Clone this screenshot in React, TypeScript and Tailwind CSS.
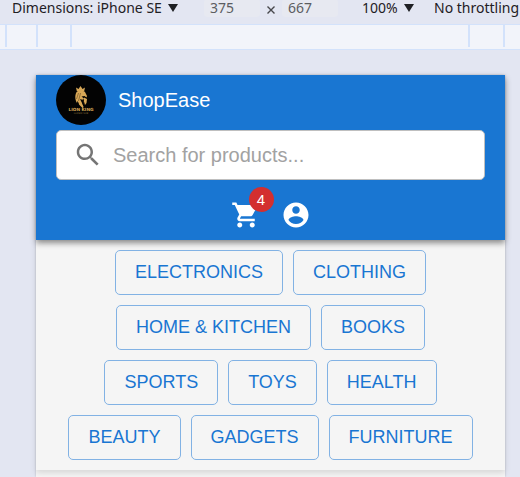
import React from 'react';

const categories = [
  'Electronics',
  'Clothing',
  'Home & Kitchen',
  'Books',
  'Sports',
  'Toys',
  'Health',
  'Beauty',
  'Gadgets',
  'Furniture',
];

function Picker({ label, value }: { label: string; value: string }) {
  return (
    <div className="flex shrink-0 items-center gap-1.5">
      <select aria-label={label} className="h-[18px] appearance-none bg-transparent text-sm leading-[18px] text-[#1f2024]">
        <option>{value}</option>
      </select>
      <svg className="pointer-events-none h-2 w-2.5" viewBox="0 0 10 8" aria-hidden="true">
        <path d="M0 0h10L5 8z" fill="#1f2024" />
      </svg>
    </div>
  );
}

function SizeInput({ label, value }: { label: string; value: string }) {
  return (
    <input
      aria-label={label}
      defaultValue={value}
      className="h-[18px] w-14 shrink-0 rounded-sm bg-[#e7e9f1] px-1.5 text-sm leading-[18px] text-[#5c5d61]"
    />
  );
}

function DeviceToolbar() {
  return (
    <div className="flex h-6 items-center overflow-hidden pb-2 pl-3 font-['Noto_Sans','Open_Sans',sans-serif] whitespace-nowrap">
      <Picker label="Device" value="Dimensions: iPhone SE" />
      <div className="ml-[26px] flex shrink-0 items-center gap-[7px]">
        <SizeInput label="Width" value="375" />
        <svg className="mt-1 h-2 w-2" viewBox="0 0 8 8" aria-hidden="true">
          <path d="M0.5 0.5l7 7M7.5 0.5l-7 7" stroke="#47484c" strokeWidth="1.4" />
        </svg>
        <SizeInput label="Height" value="667" />
      </div>
      <div className="ml-6 flex shrink-0 gap-5">
        <Picker label="Zoom" value="100%" />
        <Picker label="Throttling" value="No throttling" />
      </div>
    </div>
  );
}

function Ruler() {
  return (
    <div className="flex h-[26px] items-start border-y border-[#d3e2fb] bg-[#f2f4fa]">
      <div className="ml-[5px] h-[22px] w-[33px] border-x-2 border-[#d3e2fb]" />
      <div className="h-[22px] w-[34px] border-r-2 border-[#d3e2fb]" />
      <div className="grow" />
      <div className="mr-[15px] h-[22px] w-[37px] border-x-2 border-[#d3e2fb]" />
    </div>
  );
}

function Logo() {
  return (
    <svg className="size-[50px] shrink-0" viewBox="0 0 50 50" role="img" aria-label="Lion King">
      <circle cx="25" cy="25" r="25" fill="#030303" />
      <g fill="#d7a757">
        <path d="M20 12.500l2.500 1.500 2-3 2 3 2.500-1.500-.8 3.500h-7.400z" />
        <path d="M21 16.500c3-1.500 6-1 8 .5l2 4-.5 1.500-2-1.500-3 .5 2.500 2-1 1.500-3-1 2 4 1 4-2.500-2-3-4-.5 2c-2.500-4-2-9 0-11.500z" />
        <path d="M22 25l3 2.500 2.500 4-.5 2-4-4zM28 22.500l3 1.500-.5 4-1.500 2-1-3z" />
      </g>
      <path d="M22.500 18l-2 6M24.500 18l-2 8M26.500 24l2 5" stroke="#4a3514" strokeWidth=".5" />
      <text x="25" y="36" textAnchor="middle" fontSize="4.300" fontWeight="700" fontFamily="DejaVu Sans, sans-serif" fill="#d7a757">
        LION KING
      </text>
      <text x="25" y="39" textAnchor="middle" fontSize="2.500" fontFamily="DejaVu Sans, sans-serif" fill="#7d6335">
        LOREM SUB
      </text>
    </svg>
  );
}

function Header() {
  return (
    <header className="relative bg-[#1976d2] px-5 pb-2.5 text-white shadow-[0_3px_6px_rgba(0,0,0,0.45)]">
      <div className="flex items-center gap-3">
        <Logo />
        <h1 className="text-xl font-medium">ShopEase</h1>
      </div>
      <label className="mt-[5px] flex h-[50px] items-center gap-2.5 rounded-[5px] border border-[#bfbfbf] bg-white px-4">
        <svg className="size-[30px] shrink-0" viewBox="0 0 24 24" fill="#757575" aria-hidden="true">
          <path d="M15.500 14h-.79l-.28-.27C15.410 12.590 16 11.110 16 9.500 16 5.910 13.090 3 9.500 3S3 5.910 3 9.500 5.910 16 9.500 16c1.610 0 3.090-.59 4.230-1.570l.27.280v.79l5 4.990L20.490 19l-4.990-5zm-6 0C7.010 14 5 11.990 5 9.500S7.010 5 9.500 5 14 7.010 14 9.500 11.990 14 9.500 14z" />
        </svg>
        <input
          type="search"
          aria-label="Search for products"
          placeholder="Search for products..."
          className="min-w-0 grow bg-transparent text-xl text-[#333] outline-none placeholder:text-[#a2a2a2]"
        />
      </label>
      <div className="mt-5 flex justify-center gap-5">
        <button type="button" aria-label="Cart, 4 items" className="relative size-[30px]">
          <svg className="size-[30px]" viewBox="0 0 24 24" fill="currentColor" aria-hidden="true">
            <path d="M7 18c-1.100 0-1.990.9-1.990 2S5.900 22 7 22s2-.9 2-2-.9-2-2-2zM1 2v2h2l3.600 7.590-1.350 2.450c-.16.280-.25.610-.25.960 0 1.100.9 2 2 2h12v-2H7.420c-.14 0-.25-.11-.25-.25l.03-.12.900-1.630h7.450c.75 0 1.410-.41 1.750-1.030l3.580-6.490c.08-.14.120-.31.120-.48 0-.55-.45-1-1-1H5.210l-.94-2H1zm16 16c-1.100 0-1.990.9-1.990 2s.89 2 1.990 2 2-.9 2-2-.9-2-2-2z" />
          </svg>
          <span className="absolute -top-[13px] -right-[13px] flex size-[25px] items-center justify-center rounded-full bg-[#d32f2f] text-[15px] leading-none">
            4
          </span>
        </button>
        <button type="button" aria-label="Account" className="size-[30px]">
          <svg className="size-[30px]" viewBox="0 0 24 24" fill="currentColor" aria-hidden="true">
            <path d="M12 2C6.480 2 2 6.480 2 12s4.480 10 10 10 10-4.480 10-10S17.520 2 12 2zm0 3c1.660 0 3 1.340 3 3s-1.340 3-3 3-3-1.340-3-3 1.340-3 3-3zm0 14.200c-2.500 0-4.710-1.280-6-3.220.03-1.990 4-3.080 6-3.080 1.990 0 5.970 1.090 6 3.080-1.290 1.940-3.500 3.220-6 3.220z" />
          </svg>
        </button>
      </div>
    </header>
  );
}

function CategoryNav() {
  return (
    <nav className="flex flex-wrap justify-center gap-2.5 bg-[#f5f5f5] px-5 py-2.5 shadow-[0_3px_6px_rgba(0,0,0,0.12)]">
      {categories.map((name) => (
        <button
          key={name}
          type="button"
          className="h-[45px] rounded-[5px] border border-[#82b2e4] px-[19px] pb-0.5 text-lg text-[#1976d2] uppercase"
        >
          {name}
        </button>
      ))}
    </nav>
  );
}

export default function App() {
  return (
    <div className="flex min-h-screen flex-col bg-[#e3e6f2]">
      <DeviceToolbar />
      <Ruler />
      <main className="mt-[25px] mr-[15px] ml-9 grow bg-[#f5f5f5] font-['Liberation_Sans',Arial,sans-serif] shadow-[0_0_2px_rgba(0,0,0,0.2)]">
        <Header />
        <CategoryNav />
      </main>
    </div>
  );
}
